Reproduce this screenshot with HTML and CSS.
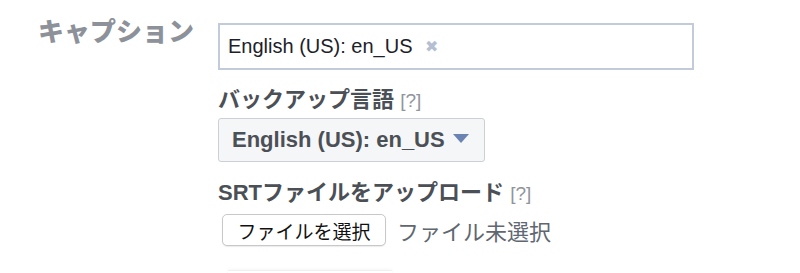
FILE: index.html
```html
<!DOCTYPE html>
<html lang="ja">
<head>
    <meta charset="UTF-8">
    <title>キャプション</title>
    <link rel="stylesheet" href="styles.css">
</head>
<body>
    <div class="form">
        <div class="label">キャプション</div>
        <div class="fields">
            <div class="token_input">
                <span class="token">English (US): en_US</span>
                <span class="token_x">&#x2716;</span>
            </div>

            <div class="sub_label">バックアップ言語 <span class="help">[?]</span></div>
            <div class="select_btn">
                <span>English (US): en_US</span>
                <span class="caret"></span>
            </div>

            <div class="sub_label upload">SRTファイルをアップロード <span class="help">[?]</span></div>
            <div class="file_row">
                <button class="file_btn">ファイルを選択</button>
                <span class="file_none">ファイル未選択</span>
            </div>

            <div class="next_btn"></div>
        </div>
    </div>
</body>
</html>
```

FILE: styles.css
```css
*{
    margin: 0;
    padding: 0;
    box-sizing: border-box;
}
body{
    background: #fff;
    font-family: "Liberation Sans", "Noto Sans CJK JP", sans-serif;
    overflow: hidden;
}
.form{
    display: grid;
    grid-template-columns: 218px 476px;
    padding-top: 23px;
}
.label{
    text-align: right;
    padding-right: 24px;
    font-size: 26px;
    font-weight: 900;
    color: #8d9199;
    line-height: 26px;
    margin-top: -4px;
}
.token_input{
    height: 47px;
    border: 2px solid #c3cbdb;
    display: flex;
    align-items: center;
    padding-left: 8px;
    font-size: 20px;
    color: #1d2129;
}
.token_x{
    margin-left: 12px;
    font-size: 16px;
    color: #b4bfd2;
}
.sub_label{
    margin-top: 16px;
    font-size: 22px;
    line-height: 28px;
    font-weight: bold;
    color: #4b4f56;
}
.help{
    font-weight: normal;
    font-size: 19px;
    color: #90949c;
}
.select_btn{
    margin-top: 3px;
    display: inline-flex;
    align-items: center;
    width: 267px;
    height: 44px;
    padding: 0 13px;
    border: 1px solid #ccd0d5;
    border-radius: 3px;
    background: #f5f6f7;
    font-size: 22px;
    font-weight: bold;
    color: #4b4f56;
}
.caret{
    margin-left: 8px;
    margin-top: -4px;
    width: 0;
    height: 0;
    border-left: 8px solid transparent;
    border-right: 8px solid transparent;
    border-top: 9px solid #6a83b3;
}
.upload{
    margin-top: 17px;
}
.file_row{
    margin-top: 6px;
    display: flex;
    align-items: center;
}
.file_btn{
    margin-left: 4px;
    width: 164px;
    height: 32px;
    border: 1px solid #c8c8c8;
    border-radius: 5px;
    background: #fff;
    font-family: "Noto Sans CJK JP", sans-serif;
    font-size: 19px;
    color: #111;
    box-shadow: 0 1px 1px rgba(0,0,0,.08);
}
.file_none{
    margin-left: 11px;
    font-size: 22px;
    color: #606770;
}
.next_btn{
    margin: 24px 0 0 10px;
    width: 164px;
    height: 30px;
    border-top: 1px solid #f0f0f0;
    box-shadow: 0 -1px 3px rgba(0,0,0,.04);
}
```
